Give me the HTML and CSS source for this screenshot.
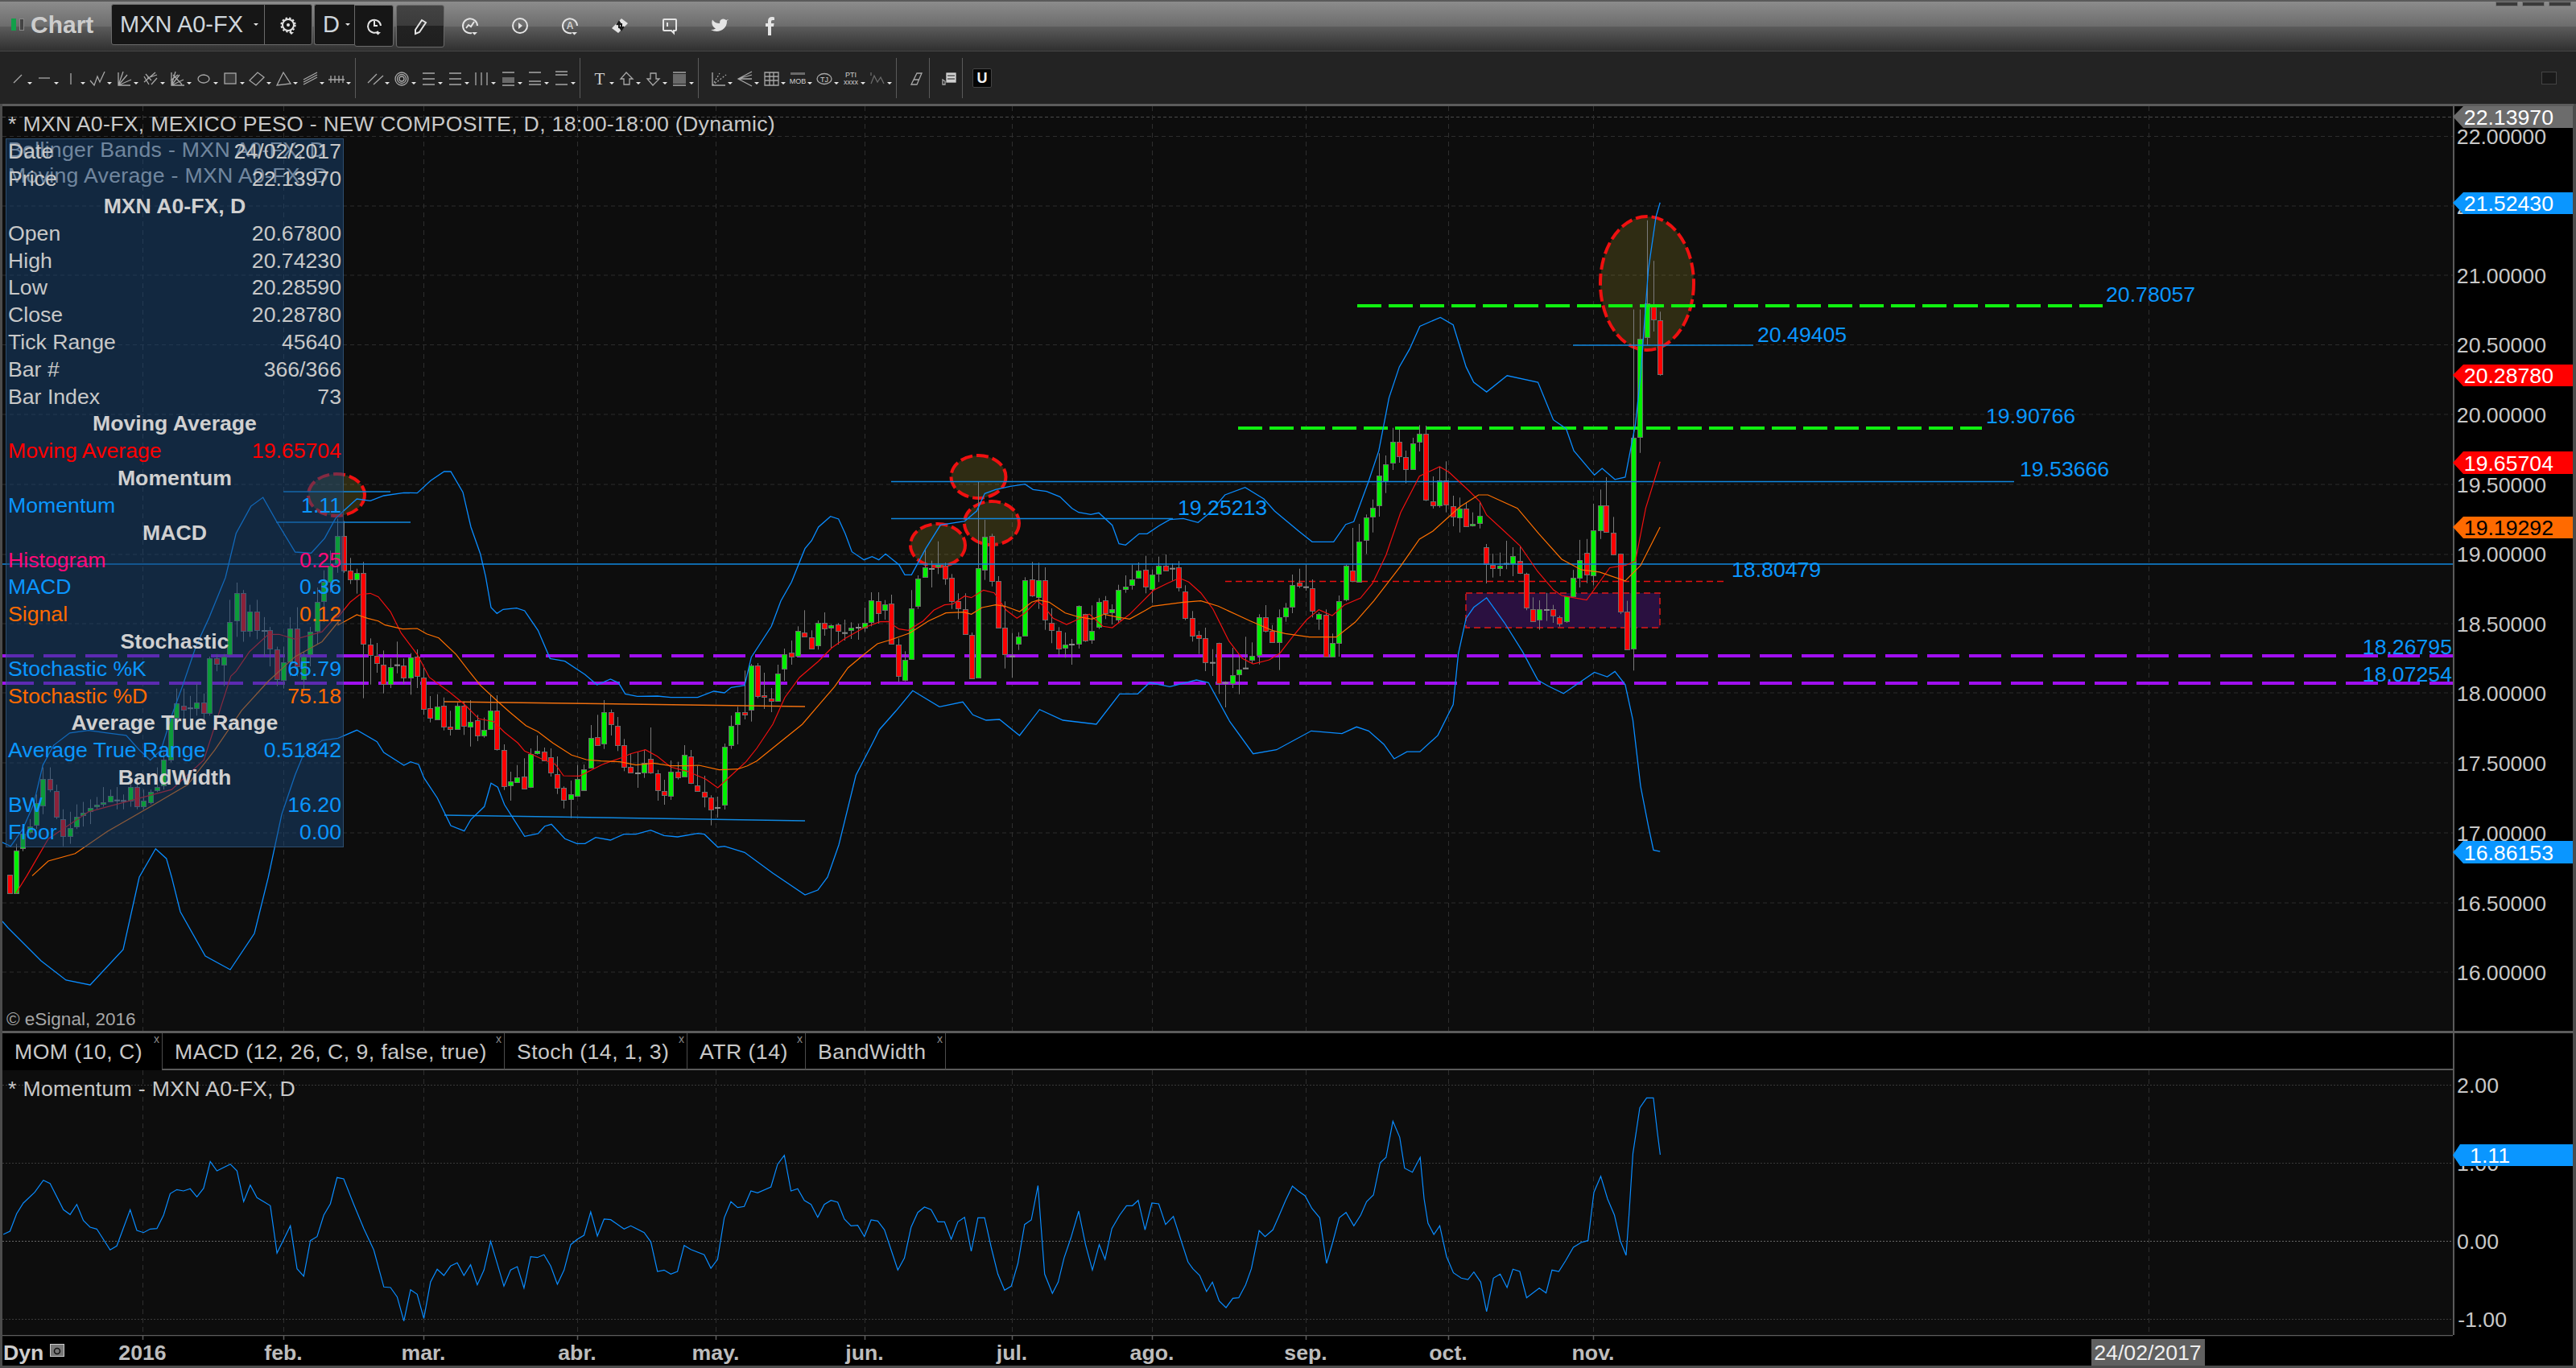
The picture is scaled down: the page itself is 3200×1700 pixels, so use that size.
FILE: index.html
```html
<!DOCTYPE html>
<html lang="en">
<head>
<meta charset="utf-8">
<title>Chart</title>
<link rel="stylesheet" href="styles.css">
</head>
<body>
<svg class="sprite" aria-hidden="true">
  <symbol id="t-gear" viewBox="0 0 24 24"><circle cx="12" cy="12" r="7"/><circle cx="12" cy="12" r="2" class="solid"/><circle cx="12" cy="12" r="8.6" stroke-dasharray="2.4 2.2"/><path d="M13 21h6l-3 3z" class="solid"/></symbol>
  <symbol id="t-clock" viewBox="0 0 24 24"><path d="M17 19A8 8 0 1 1 20 12"/><path d="M12 6v6h4"/><path d="M13 20h7l-3.500 3.500z" class="solid"/></symbol>
  <symbol id="t-pencil" viewBox="0 0 24 24"><path d="M6 16 14 4l5 3-8 12-5 2z"/></symbol>
  <symbol id="t-chart" viewBox="0 0 24 24"><path d="M14 21A9 9 0 1 1 21 12"/><path d="M7 15l3-4 3 2 4-6"/><path d="M14 20h7l-3.500 3.500z" class="solid"/></symbol>
  <symbol id="t-play" viewBox="0 0 24 24"><circle cx="12" cy="12" r="9"/><path d="M10 8l5 4-5 4z" class="solid"/></symbol>
  <symbol id="t-auto" viewBox="0 0 24 24"><path d="M14 21A9 9 0 1 1 21 12"/><text x="12" y="16" class="ictext big">A</text><path d="M14 20h7l-3.500 3.500z" class="solid"/></symbol>
  <symbol id="t-swap" viewBox="0 0 24 24"><path d="M2 15 14 3l8 6-12 12z" class="solid"/><path d="M11 15V9M8 11l3-4 3 4M14 9v6M11 13l3 4 3-4" class="cut"/></symbol>
  <symbol id="t-talk" viewBox="0 0 24 24"><path d="M5 4h14a1 1 0 0 1 1 1v12a1 1 0 0 1-1 1h-2v3l-3-3H5a1 1 0 0 1-1-1V5a1 1 0 0 1 1-1zM9 8v5"/></symbol>
  <symbol id="t-bird" viewBox="0 0 24 24"><path class="solid" d="M23 4a10.900 10.900 0 0 1-3 1 4.500 4.500 0 0 0-7.900 3v1A10.700 10.700 0 0 1 3 4.500s-3 7 4 11a11.600 11.600 0 0 1-6 1.500c9 5 20 0 20-10.500 0-.3 0-.5-.1-.8A7.700 7.700 0 0 0 23 4z"/></symbol>
  <symbol id="t-f" viewBox="0 0 24 24"><path class="solid" d="M14 24V13h3l.6-4H14V7c0-1.200.4-2 2-2h2V1.500C17.500 1.400 16.500 1 15 1c-3 0-5 1.800-5 5v3H7v4h3v11z"/></symbol>

  <symbol id="d-line" viewBox="0 0 24 24"><path d="M7 18 17 8"/></symbol>
  <symbol id="d-h" viewBox="0 0 24 24"><path d="M5 12H19"/></symbol>
  <symbol id="d-v" viewBox="0 0 24 24"><path d="M12 6V20"/></symbol>
  <symbol id="d-zig" viewBox="0 0 24 24"><path d="M3 15l5 6 4-11 3 7 6-13"/></symbol>
  <symbol id="d-fan" viewBox="0 0 24 24"><path d="M5 5V21H20M5 21 21 14M5 21 16 8M5 21 11 4"/></symbol>
  <symbol id="d-fork" viewBox="0 0 24 24"><path d="M4 10l6 10M4 17 18 5M8 12 20 8M13 20 20 12M6 7l7 8"/></symbol>
  <symbol id="d-gann" viewBox="0 0 24 24"><path d="M5 5V21H21M5 21 20 14M5 21 15 8M5 21 10 4M7 8l11 12M4 15l9-7"/></symbol>
  <symbol id="d-ell" viewBox="0 0 24 24"><ellipse cx="12" cy="13" rx="7" ry="5"/></symbol>
  <symbol id="d-rect" viewBox="0 0 24 24"><rect x="5" y="6" width="14" height="13" class="tint"/></symbol>
  <symbol id="d-dia" viewBox="0 0 24 24"><path d="M3 15 13 5l8 6-10 10z"/></symbol>
  <symbol id="d-tri" viewBox="0 0 24 24"><path d="M12 5 21 19 4 21z"/></symbol>
  <symbol id="d-par" viewBox="0 0 24 24"><path d="M4 14 21 5M4 17 21 8M4 20 21 11"/></symbol>
  <symbol id="d-cyc" viewBox="0 0 24 24"><path d="M2 14H22M5 9v9M10 9v9M15 9v9M20 9v9"/></symbol>
  <symbol id="d-two" viewBox="0 0 24 24"><path d="M3 18 14 7M10 20 22 9"/></symbol>
  <symbol id="d-rings" viewBox="0 0 24 24"><circle cx="12" cy="13" r="8"/><circle cx="12" cy="13" r="5.500"/><circle cx="12" cy="13" r="3"/></symbol>
  <symbol id="d-three" viewBox="0 0 24 24"><path d="M5 6H20M5 13H20M5 20H20"/></symbol>
  <symbol id="d-bars" viewBox="0 0 24 24"><path d="M5 5V21M12 5V21M19 5V21"/></symbol>
  <symbol id="d-band" viewBox="0 0 24 24"><path d="M5 5H20M5 21H20"/><rect x="5" y="11" width="15" height="7" class="fillg"/></symbol>
  <symbol id="d-lev" viewBox="0 0 24 24"><path d="M5 5H20M5 16H20M5 20H20"/></symbol>
  <symbol id="d-lev2" viewBox="0 0 24 24"><path d="M5 4H20M5 8H20M5 20H20"/></symbol>
  <symbol id="d-text" viewBox="0 0 24 24"><text x="12" y="20" class="ictext serif">T</text></symbol>
  <symbol id="d-up" viewBox="0 0 24 24"><path d="M12 5 20 13H16V20H9V13H5z"/></symbol>
  <symbol id="d-down" viewBox="0 0 24 24"><path d="M12 21 20 13H16V6H9V13H5z"/></symbol>
  <symbol id="d-block" viewBox="0 0 24 24"><path d="M4 5H20M4 21H20"/><rect x="4" y="7" width="16" height="12" class="fillg"/></symbol>
  <symbol id="d-ray" viewBox="0 0 24 24"><path d="M5 21 22 8M5 21 14 6" stroke-dasharray="2 2"/><path d="M5 5V21H21"/></symbol>
  <symbol id="d-arrows" viewBox="0 0 24 24"><path d="M21 4 4 13 21 22M4 13H21M4 13 21 8"/></symbol>
  <symbol id="d-grid" viewBox="0 0 24 24"><path d="M4 5H21V21H4zM4 10H21M4 15H21M10 5V21M15 5V21"/></symbol>
  <symbol id="d-mob" viewBox="0 0 24 24"><rect x="3" y="5" width="18" height="3" class="fillg"/><text x="12" y="19" class="ictext small">MOB</text></symbol>
  <symbol id="d-tj" viewBox="0 0 24 24"><ellipse cx="12" cy="13" rx="9" ry="6.500"/><text x="12" y="16.500" class="ictext small">TJ</text></symbol>
  <symbol id="d-pti" viewBox="0 0 24 24"><text x="12" y="11" class="ictext small">PTI</text><text x="12" y="20" class="ictext small">xxxx</text></symbol>
  <symbol id="d-wave" viewBox="0 0 24 24"><path d="M4 19l4-10 4 8 4-6 4 8M4 5v4"/></symbol>
  <symbol id="d-erase" viewBox="0 0 24 24"><path d="M6 20 13 6h6l-6 14zM9 14h7"/></symbol>
  <symbol id="d-stack" viewBox="0 0 24 24"><rect x="9" y="6" width="11" height="11" class="wfill"/><path d="M4 14l3 2v4H4z"/><path d="M10 9h9M10 13h9" class="cut thin"/></symbol>
</svg>

<div class="app">
  <header class="titlebar">
    <span class="led on"></span>
    <span class="led off"></span>
    <h1 class="appname">Chart</h1>
    <div class="box symbol">
      <div class="symname"><span class="boxtext">MXN A0-FX</span><i class="caret"></i></div>
      <span class="symgear"><svg class="ic bright"><use href="#t-gear"/></svg></span>
    </div>
    <div class="box interval"><span class="boxtext">D</span><i class="caret"></i></div>
    <div class="box clockbox"><svg class="ic bright"><use href="#t-clock"/></svg></div>
    <div class="box pencil"><svg class="ic bright"><use href="#t-pencil"/></svg></div>
    <div class="ticons">
      <span class="ticon"><svg class="ic bright"><use href="#t-chart"/></svg></span>
      <span class="ticon"><svg class="ic bright"><use href="#t-play"/></svg></span>
      <span class="ticon"><svg class="ic bright"><use href="#t-auto"/></svg></span>
      <span class="ticon"><svg class="ic bright"><use href="#t-swap"/></svg></span>
      <span class="ticon"><svg class="ic bright"><use href="#t-talk"/></svg></span>
      <span class="ticon"><svg class="ic bright"><use href="#t-bird"/></svg></span>
      <span class="ticon"><svg class="ic bright"><use href="#t-f"/></svg></span>
    </div>
    <div class="winctl"><i></i><i></i><i></i></div>
  </header>

  <nav class="toolbar">
    <span class="tool"><svg class="ic"><use href="#d-line"/></svg><i class="caret"></i></span>
    <span class="tool"><svg class="ic"><use href="#d-h"/></svg><i class="caret"></i></span>
    <span class="tool"><svg class="ic"><use href="#d-v"/></svg><i class="caret"></i></span>
    <span class="tool"><svg class="ic"><use href="#d-zig"/></svg><i class="caret"></i></span>
    <span class="tool"><svg class="ic"><use href="#d-fan"/></svg><i class="caret"></i></span>
    <span class="tool"><svg class="ic"><use href="#d-fork"/></svg><i class="caret"></i></span>
    <span class="tool"><svg class="ic"><use href="#d-gann"/></svg><i class="caret"></i></span>
    <span class="tool"><svg class="ic"><use href="#d-ell"/></svg><i class="caret"></i></span>
    <span class="tool"><svg class="ic"><use href="#d-rect"/></svg><i class="caret"></i></span>
    <span class="tool"><svg class="ic"><use href="#d-dia"/></svg><i class="caret"></i></span>
    <span class="tool"><svg class="ic"><use href="#d-tri"/></svg><i class="caret"></i></span>
    <span class="tool"><svg class="ic"><use href="#d-par"/></svg><i class="caret"></i></span>
    <span class="tool"><svg class="ic"><use href="#d-cyc"/></svg><i class="caret"></i></span>
    <span class="sep"></span>
    <span class="tool"><svg class="ic"><use href="#d-two"/></svg><i class="caret"></i></span>
    <span class="tool"><svg class="ic"><use href="#d-rings"/></svg><i class="caret"></i></span>
    <span class="tool"><svg class="ic"><use href="#d-three"/></svg><i class="caret"></i></span>
    <span class="tool"><svg class="ic"><use href="#d-three"/></svg><i class="caret"></i></span>
    <span class="tool"><svg class="ic"><use href="#d-bars"/></svg><i class="caret"></i></span>
    <span class="tool"><svg class="ic"><use href="#d-band"/></svg><i class="caret"></i></span>
    <span class="tool"><svg class="ic"><use href="#d-lev"/></svg><i class="caret"></i></span>
    <span class="tool"><svg class="ic"><use href="#d-lev2"/></svg><i class="caret"></i></span>
    <span class="sep"></span>
    <span class="tool"><svg class="ic"><use href="#d-text"/></svg><i class="caret"></i></span>
    <span class="tool"><svg class="ic"><use href="#d-up"/></svg><i class="caret"></i></span>
    <span class="tool"><svg class="ic"><use href="#d-down"/></svg><i class="caret"></i></span>
    <span class="tool"><svg class="ic"><use href="#d-block"/></svg><i class="caret"></i></span>
    <span class="sep"></span>
    <span class="tool"><svg class="ic"><use href="#d-ray"/></svg><i class="caret"></i></span>
    <span class="tool"><svg class="ic"><use href="#d-arrows"/></svg><i class="caret"></i></span>
    <span class="tool"><svg class="ic"><use href="#d-grid"/></svg><i class="caret"></i></span>
    <span class="tool"><svg class="ic"><use href="#d-mob"/></svg><i class="caret"></i></span>
    <span class="tool"><svg class="ic"><use href="#d-tj"/></svg><i class="caret"></i></span>
    <span class="tool"><svg class="ic"><use href="#d-pti"/></svg><i class="caret"></i></span>
    <span class="tool"><svg class="ic dim"><use href="#d-wave"/></svg><i class="caret"></i></span>
    <span class="sep"></span>
    <span class="tool solo"><svg class="ic"><use href="#d-erase"/></svg></span>
    <span class="sep near"></span>
    <span class="tool solo"><svg class="ic"><use href="#d-stack"/></svg></span>
    <span class="sep near"></span>
    <span class="ubtn">U</span>
    <span class="endbtn"></span>
  </nav>

  <div class="rule"></div>

  <section class="pane pane-main">
    <svg class="plot" id="mainplot" viewBox="3 132 3044 1149" width="3044" height="1149">
      <g id="maingrid"></g>
      <text x="10" y="163" class="lbl">* MXN A0-FX, MEXICO PESO - NEW COMPOSITE, D, 18:00-18:00 (Dynamic)</text>
      <text x="10" y="195" class="lbl">Bollinger Bands - MXN A0-FX, D</text>
      <text x="10" y="227" class="lbl">Moving Average - MXN A0-FX, D</text>
      <text x="8" y="1274" class="faint">© eSignal, 2016</text>

      <rect x="1821" y="737" width="241" height="43" class="zone"/>
      <ellipse cx="2046" cy="352" rx="58" ry="83" class="oval"/>
      <ellipse cx="1165" cy="677.500" rx="34" ry="26.500" class="oval"/>
      <ellipse cx="1215.500" cy="592.500" rx="34" ry="26.500" class="oval"/>
      <ellipse cx="1232" cy="650" rx="34" ry="27" class="oval"/>
      <ellipse cx="418" cy="615" rx="35" ry="26" class="oval"/>

      <path d="M2 815H3047M2 849H3047" class="purple"/>
      <path d="M1522 722.500H2142" class="reddash"/>

      <g id="candles"></g>

      <path d="M1686 380H2612M1538 532H2462" class="greendash"/>
      <path d="M552 872 1000 878" class="ohline"/>
      <path d="M552 1013 1000 1020M1107 598.500H2502M1107 644.500H1457M1954 429H2178M3 701H3047M352 611H485M343 649H510" class="bhline"/>

      <g id="lines"></g>

      <text x="2616" y="375" class="val">20.78057</text>
      <text x="2183" y="425" class="val">20.49405</text>
      <text x="2467" y="526" class="val">19.90766</text>
      <text x="2509" y="592" class="val">19.53666</text>
      <text x="1463" y="640" class="val">19.25213</text>
      <text x="2151" y="717" class="val">18.80479</text>
      <text x="3046" y="813" class="val end">18.26795</text>
      <text x="3046" y="847" class="val end">18.07254</text>
    </svg>

    <aside class="info">
      <div class="row"><span>Date</span><span>24/02/2017</span></div>
      <div class="row"><span>Price</span><span>22.13970</span></div>
      <div class="row head">MXN A0-FX, D</div>
      <div class="row"><span>Open</span><span>20.67800</span></div>
      <div class="row"><span>High</span><span>20.74230</span></div>
      <div class="row"><span>Low</span><span>20.28590</span></div>
      <div class="row"><span>Close</span><span>20.28780</span></div>
      <div class="row"><span>Tick Range</span><span>45640</span></div>
      <div class="row"><span>Bar #</span><span>366/366</span></div>
      <div class="row"><span>Bar Index</span><span>73</span></div>
      <div class="row head">Moving Average</div>
      <div class="row red"><span>Moving Average</span><span>19.65704</span></div>
      <div class="row head">Momentum</div>
      <div class="row blue"><span>Momentum</span><span>1.11</span></div>
      <div class="row head">MACD</div>
      <div class="row pink"><span>Histogram</span><span>0.25</span></div>
      <div class="row blue"><span>MACD</span><span>0.36</span></div>
      <div class="row orange"><span>Signal</span><span>0.12</span></div>
      <div class="row head">Stochastic</div>
      <div class="row blue"><span>Stochastic %K</span><span>65.79</span></div>
      <div class="row orange"><span>Stochastic %D</span><span>75.18</span></div>
      <div class="row head">Average True Range</div>
      <div class="row blue"><span>Average True Range</span><span>0.51842</span></div>
      <div class="row head">BandWidth</div>
      <div class="row blue"><span>BW</span><span>16.20</span></div>
      <div class="row blue"><span>Floor</span><span>0.00</span></div>
    </aside>

    <svg class="axis" viewBox="3047 132 149 1149" width="149" height="1149">
      <g class="ticks">
        <text x="3163" y="179">22.00000</text>
        <text x="3163" y="266">21.50000</text>
        <text x="3163" y="352">21.00000</text>
        <text x="3163" y="438">20.50000</text>
        <text x="3163" y="525">20.00000</text>
        <text x="3163" y="612">19.50000</text>
        <text x="3163" y="698">19.00000</text>
        <text x="3163" y="785">18.50000</text>
        <text x="3163" y="871">18.00000</text>
        <text x="3163" y="958">17.50000</text>
        <text x="3163" y="1045">17.00000</text>
        <text x="3163" y="1132">16.50000</text>
        <text x="3163" y="1218">16.00000</text>
      </g>
      <polygon points="3047,145 3060,132 3196,132 3196,159 3060,159" class="tag gray"/>
      <text x="3172" y="155" class="tagtext">22.13970</text>
      <polygon points="3047,252 3060,239 3196,239 3196,266 3060,266" class="tag bluebg"/>
      <text x="3172" y="262" class="tagtext">21.52430</text>
      <polygon points="3047,466 3060,453 3196,453 3196,480 3060,480" class="tag redbg"/>
      <text x="3172" y="476" class="tagtext">20.28780</text>
      <polygon points="3047,575 3060,561 3196,561 3196,589 3060,589" class="tag redbg"/>
      <text x="3172" y="585" class="tagtext">19.65704</text>
      <polygon points="3047,655 3060,642 3196,642 3196,669 3060,669" class="tag orangebg"/>
      <text x="3172" y="665" class="tagtext dark">19.19292</text>
      <polygon points="3047,1059 3060,1045 3196,1045 3196,1073 3060,1073" class="tag bluebg"/>
      <text x="3172" y="1069" class="tagtext">16.86153</text>
    </svg>
  </section>

  <div class="rule wide"></div>

  <section class="tabrow">
    <div class="tabs">
      <div class="tab active w1">MOM (10, C)<i class="closex">x</i></div>
      <div class="tab w2">MACD (12, 26, C, 9, false, true)<i class="closex">x</i></div>
      <div class="tab w3">Stoch (14, 1, 3)<i class="closex">x</i></div>
      <div class="tab w4">ATR (14)<i class="closex">x</i></div>
      <div class="tab w5">BandWidth<i class="closex">x</i></div>
      <div class="tabfill"></div>
    </div>
    <div class="axisblank"></div>
  </section>

  <section class="pane pane-sub">
    <svg class="plot" id="subplot" viewBox="3 1330 3044 329" width="3044" height="329">
      <g id="subgrid"></g>
      <text x="10" y="1362" class="lbl">* Momentum - MXN A0-FX, D</text>
      <g id="momentum"></g>
    </svg>
    <svg class="axis" viewBox="3047 1330 149 329" width="149" height="329">
      <g class="ticks">
        <text x="3104" y="1358">2.00</text>
        <text x="3104" y="1455">1.00</text>
        <text x="3104" y="1552">0.00</text>
        <text x="3114" y="1649">-1.00</text>
      </g>
      <polygon points="3047,1435.500 3056,1422 3196,1422 3196,1449 3056,1449" class="tag bluebg"/>
      <text x="3118" y="1445" class="tagtext">1.11</text>
    </svg>
  </section>

  <footer class="dateaxis">
    <svg class="dates" viewBox="3 1659 3194 38" width="3194" height="38">
      <path d="M3 1659.500H3047M177.500 1660v5M352.500 1660v5M526.500 1660v5M717.500 1660v5M889.500 1660v5M1074.500 1660v5M1257.500 1660v5M1431.500 1660v5M1622.500 1660v5M1799.500 1660v5M1979.500 1660v5" class="dline"/>
      <text x="4" y="1690" class="dlabel start">Dyn</text>
      <rect x="62.500" y="1670.500" width="17" height="15" class="lockbox"/>
      <circle cx="71" cy="1679" r="3.500" class="lockdot"/>
      <text x="177" y="1690" class="dlabel">2016</text>
      <text x="352" y="1690" class="dlabel">feb.</text>
      <text x="526" y="1690" class="dlabel">mar.</text>
      <text x="717" y="1690" class="dlabel">abr.</text>
      <text x="889" y="1690" class="dlabel">may.</text>
      <text x="1074" y="1690" class="dlabel">jun.</text>
      <text x="1257" y="1690" class="dlabel">jul.</text>
      <text x="1431" y="1690" class="dlabel">ago.</text>
      <text x="1622" y="1690" class="dlabel">sep.</text>
      <text x="1799" y="1690" class="dlabel">oct.</text>
      <text x="1979" y="1690" class="dlabel">nov.</text>
      <rect x="2598" y="1664" width="141" height="33" class="datetag"/>
      <text x="2668" y="1690" class="datetagtext">24/02/2017</text>
    </svg>
  </footer>
</div>
<script src="chart.js"></script>
</body>
</html>
```

FILE: styles.css
```css
* { box-sizing: border-box; }
html, body { margin: 0; padding: 0; background: #484848; }
body { width: 3200px; height: 1700px; overflow: hidden; font-family: "Liberation Sans", Arial, sans-serif; color: #cfcfcf; }
.sprite { display: none; }

.app { width: 3200px; height: 1700px; display: flex; flex-direction: column; background: #4c4c4c; }

/* title bar */
.titlebar {
  height: 64px; display: flex; align-items: flex-start; padding-left: 14px; flex: none; position: relative;
  background: linear-gradient(#8c8c8c 0, #6c6c6c 50%, #5c5c5c 50%, #303030 98%, #454545 98%);
  border-top: 2px solid #5a5a5a;
}
.led { width: 6px; height: 15px; margin-top: 21px; margin-right: 4px; }
.led.on { background: #12a04a; }
.led.off { border: 1px solid #888; background: #444; }
.appname { margin: 9px 0 0 4px; width: 100px; font-size: 30px; line-height: 40px; font-weight: 700; color: #cdcdcd; }
.box { background: #161616; border: 1px solid #6a6a6a; border-radius: 3px; display: flex; align-items: center; }
.symbol { width: 250px; height: 51px; margin-top: 3px; }
.symname { width: 190px; height: 100%; display: flex; align-items: center; padding-left: 10px; border-right: 1px solid #6a6a6a; }
.boxtext { font-size: 29px; color: #cfd6dc; }
.caret { display: block; flex: none; width: 0; height: 0; border-left: 3px solid transparent; border-right: 3px solid transparent; border-top: 3px solid #e8e8e8; }
.symname .caret { margin-left: 13px; }
.symgear { flex: 1; display: flex; justify-content: center; }
.interval { width: 50px; height: 51px; margin: 3px 0 0 2px; padding-left: 10px; border-right: 0; border-radius: 3px 0 0 3px; }
.interval .caret { margin-left: 7px; }
.clockbox { width: 49px; height: 52px; margin-top: 4px; justify-content: center; border-radius: 0 3px 3px 3px; }
.pencil { width: 60px; height: 53px; margin: 4px 0 0 3px; justify-content: center; background: linear-gradient(#434343 0, #3b3b3b 50%, #222 50%, #1f1f1f 100%); }
.ticons { display: flex; margin: 4px 0 0 1px; }
.ticon { width: 62px; height: 52px; display: flex; align-items: center; justify-content: center; }
.winctl { margin-left: auto; margin-right: 6px; display: flex; gap: 5px; }
.winctl i { display: block; width: 28px; height: 6px; background: #3a3a3a; border: 1px solid #777; }

/* icons */
.ic { display: block; flex: none; width: 24px; height: 24px; fill: none; stroke: #a8a8a8; stroke-width: 1.300; color: #a8a8a8; }
.ic.bright { stroke: #e4e4e4; stroke-width: 2; color: #e4e4e4; }
.ic.dim { stroke: #6a6a6a; }
.solid { fill: #e4e4e4; stroke: none; }
.cut { stroke: #181818; stroke-width: 2; fill: #181818; }
.cut.thin { stroke-width: 1; fill: none; }
.tint { fill: #3a3a3a; }
.fillg { fill: #6a6a6a; stroke: none; }
.wfill { fill: #d0d0d0; stroke: #d0d0d0; }
.ictext { font-family: "Liberation Sans", Arial, sans-serif; text-anchor: middle; fill: #d0d0d0; stroke: none; }
.ictext.big { font-size: 12px; font-weight: 700; }
.ictext.small { font-size: 9px; }
.ictext.serif { font-family: "Liberation Serif", serif; font-size: 21px; font-weight: 400; }

/* drawing toolbar */
.toolbar { height: 65px; flex: none; display: flex; align-items: center; padding-left: 10px; background: #232323; }
.tool { display: flex; margin-right: 3px; flex: none; }
.tool .caret { margin-top: 17px; }
.tool.solo { margin-right: 0; }
.sep { width: 1px; height: 50px; background: #5a5a5a; margin: 0 12px 0 2px; flex: none; }
.sep.near { margin-left: 4px; }
.ubtn { width: 24px; height: 24px; background: #050505; border: 1px solid #444; border-radius: 2px; color: #f0f0f0; font-size: 18px; font-weight: 700; line-height: 22px; text-align: center; flex: none; }
.endbtn { margin-left: auto; margin-right: 24px; width: 19px; height: 16px; background: #1a1a1a; border: 1px solid #444; flex: none; }

.rule { height: 3px; flex: none; margin-left: 3px; margin-right: 3px; background: #5c5c5c; }

/* panes */
.pane { display: flex; position: relative; margin-left: 3px; margin-right: 4px; flex: none; background: #000; }
.pane-main { height: 1149px; }
.pane-sub { height: 329px; }
.plot { display: block; flex: none; background: #0d0d0d; }
.axis { display: block; flex: none; background: #000; }
.axis, .axisblank { box-shadow: inset 2px 0 0 #5a5a5a; }

.lbl { font-size: 26.670px; fill: #c8c8c8; letter-spacing: .3px; }
.faint { font-size: 22.500px; fill: #a6a6a6; }
.val { font-size: 26.670px; fill: #0a96ff; }
.val.end { text-anchor: end; }
.zone { fill: #2a1040; stroke: #e01818; stroke-width: 1.500; stroke-dasharray: 8 5; }
.oval { fill: rgba(255, 235, 60, .14); stroke: #f01010; stroke-width: 4; stroke-dasharray: 15 5; }
.purple { fill: none; stroke: #a010f0; stroke-width: 4; stroke-dasharray: 40 12; }
.reddash { fill: none; stroke: #e81010; stroke-width: 1.500; stroke-dasharray: 8 5; }
.greendash { fill: none; stroke: #10f010; stroke-width: 4; stroke-dasharray: 30 9; }
.bhline { fill: none; stroke: #1088e0; stroke-width: 1.500; }
.ohline { fill: none; stroke: #f07010; stroke-width: 1.500; }

.ticks text { font-size: 26.670px; fill: #c8c8c8; text-anchor: end; }
.gray { fill: #6c6c6c; }
.bluebg { fill: #0a96ff; }
.redbg { fill: #ff0000; }
.orangebg { fill: #ff6a00; }
.tagtext { font-size: 26.670px; fill: #ffffff; text-anchor: end; }
.tagtext.dark { fill: #000; }

/* data window */
.info {
  position: absolute; left: 4px; top: 40px; width: 420px; height: 881px; padding: 0 2px;
  display: grid; grid-template-rows: repeat(26, 1fr);
  background: rgba(23, 67, 115, .5); border: 1px solid rgba(70, 110, 150, .55);
  font-size: 26.670px; color: #c8c8c8;
}
.row { display: flex; justify-content: space-between; align-items: center; white-space: nowrap; line-height: 30px; padding-bottom: 3px; }
.row.head { justify-content: center; font-weight: 700; color: #d0d0d0; }
.row.red { color: #ff0000; }
.row.blue { color: #0a96ff; }
.row.pink { color: #ff0a78; }
.row.orange { color: #ff6a00; }

/* indicator tabs */
.tabrow { height: 46px; flex: none; display: flex; margin-left: 3px; margin-right: 4px; background: #000; }
.tabs { width: 3044px; display: flex; flex: none; }
.tab { position: relative; padding: 6px 0 0 15px; font-size: 26.670px; line-height: 34px; letter-spacing: .45px; color: #c8c8c8; border-left: 1px solid #4c4c4c; border-bottom: 2px solid #5a5a5a; white-space: nowrap; flex: none; }
.tab.active { border-left: 0; border-bottom: 0; }
.closex { position: absolute; right: 3px; top: -1px; font-size: 14px; line-height: 16px; font-style: normal; letter-spacing: 0; color: #8a8a8a; }
.w1 { width: 198px; }
.w2 { width: 425px; }
.w3 { width: 227px; }
.w4 { width: 147px; }
.w5 { width: 174px; }
.tabfill { flex: 1; border-left: 1px solid #4c4c4c; border-bottom: 2px solid #5a5a5a; }
.axisblank { flex: 1; }

/* date axis */
.dateaxis { height: 38px; flex: none; margin-left: 3px; background: #000; width: 3193px; }
.dates { display: block; }
.dline { fill: none; stroke: #5c5c5c; stroke-width: 1.500; }
.dlabel { font-size: 26.670px; font-weight: 700; fill: #bdbdbd; text-anchor: middle; }
.dlabel.start { text-anchor: start; fill: #cdcdcd; }
.lockbox { fill: #777; stroke: #ccc; }
.lockdot { fill: none; stroke: #111; stroke-width: 1.500; }
.datetag { fill: #606060; }
.datetagtext { font-size: 26.670px; fill: #eeeeee; text-anchor: middle; }

/* drawn from chart.js */
.gridh { stroke: #2c2c2c; stroke-width: 1; stroke-dasharray: 5 4; fill: none; }
.gridv { stroke: #2e2e2e; stroke-width: 1; stroke-dasharray: 6 5; fill: none; }
.gridtop { stroke: #4a4a4a; stroke-width: 1; stroke-dasharray: 4 3; fill: none; }
.griddot { stroke: #3a3a3a; stroke-width: 1; stroke-dasharray: 2 2; fill: none; }
.gridzero { stroke: #666; stroke-width: 1; stroke-dasharray: 2 2; fill: none; }
.wick { stroke: #7a7a7a; stroke-width: 1; fill: none; }
.body { stroke: #6e6e6e; stroke-width: 1; }
.body.g { fill: #00f000; }
.body.r { fill: #ff0000; }
.doji { fill: #8a8a8a; }
.band { fill: none; stroke: #0a8cff; stroke-width: 1.300; }
.mared { fill: none; stroke: #f01010; stroke-width: 1.200; }
.maorange { fill: none; stroke: #ff7000; stroke-width: 1.200; }
.mom { fill: none; stroke: #0a8cff; stroke-width: 1.200; }
```

FILE: chart.js
```js
(function () {
  var NS = 'http://www.w3.org/2000/svg';
  function el(parent, name, attrs) {
    var n = document.createElementNS(NS, name);
    for (var k in attrs) n.setAttribute(k, attrs[k]);
    parent.appendChild(n);
    return n;
  }

  /* Reading frames: the numbers below were read off crops of the chart. */
  var F2 = [0, 130, 3, 1.633], F8 = [420, 560, 3, 3], F9 = [920, 500, 3, 3],
      F10 = [1420, 480, 3, 3], F3 = [1700, 220, 1.568, 1.823],
      F6 = [400, 550, 1.206, 3], F5 = [0, 1230, 1.206, 3], F7 = [1300, 1230, 0.825, 3],
      ABS = [0, 0, 1, 1];

  /* x, bodyTop, bodyBottom, wickTop, wickBottom, kind */
  var barSets = [
    [F2, [
      [35,1563,1600,1563,1600,'r'],[60,1513,1600,1500,1600,'g'],[85,1480,1510,1465,1515,'g'],[110,1465,1477,1450,1480,'g'],
      [135,1418,1462,1400,1470,'g'],[160,1368,1422,1345,1440,'g'],[185,1368,1390,1345,1395,'r'],[210,1393,1445,1380,1450,'r'],
      [235,1450,1484,1430,1505,'r'],[260,1468,1485,1435,1500,'g'],[285,1445,1465,1420,1470,'g'],[310,1437,1442,1415,1465,'g'],
      [335,1427,1434,1410,1460,'g'],[360,1420,1424,1405,1430,'g'],[385,1416,1420,1385,1425,'g'],[410,1402,1414,1390,1416,'g'],
      [435,1412,1412,1385,1430,'d'],[460,1413,1413,1400,1430,'d'],[485,1385,1412,1370,1425,'g'],[510,1385,1425,1375,1430,'r'],
      [535,1413,1424,1390,1430,'g'],[560,1395,1416,1390,1420,'g'],[585,1385,1392,1345,1395,'g'],[610,1330,1382,1315,1390,'g'],
      [635,1245,1330,1240,1335,'g'],[658,1215,1245,1185,1248,'g'],[683,1220,1228,1185,1260,'r'],[708,1225,1225,1200,1250,'d'],
      [733,1213,1225,1175,1240,'g'],[758,1213,1235,1195,1250,'r'],[781,1123,1234,1120,1240,'g'],[808,1123,1135,1115,1150,'r'],
      [833,1120,1136,1115,1180,'g'],[856,1050,1115,1005,1120,'g'],[883,992,1048,970,1080,'g'],[907,992,1068,985,1090,'r'],
      [931,1028,1068,1015,1080,'g'],[958,1028,1065,1005,1085,'r'],[983,1068,1068,1040,1120,'d'],[1006,1066,1104,1060,1140,'r'],
      [1031,1106,1166,1100,1180,'r'],[1056,1132,1168,1100,1185,'g'],[1081,1063,1130,1040,1160,'g'],[1106,1063,1140,1020,1160,'r'],
      [1132,1120,1165,1110,1190,'g'],[1156,1070,1116,1060,1140,'g'],[1181,1010,1068,980,1095,'g'],[1206,968,1008,945,1050,'g'],
      [1231,936,968,905,990,'g'],[1256,875,932,840,950,'g'],[1281,875,945,845,950,'r']
    ]],
    [F8, [
      [46,448,481,400,497,'r'],[70,455,478,440,533,'g'],[94,455,718,415,923,'r'],[121,722,760,700,872,'r'],[145,764,790,717,828,'r'],
      [169,797,868,745,905,'r'],[196,806,868,775,885,'g'],[220,800,800,712,830,'d'],[244,800,844,775,870,'r'],[271,770,844,755,910,'g'],
      [295,769,841,741,885,'r'],[319,845,961,810,985,'r'],[343,959,994,915,1013,'r'],[370,953,1000,908,1002,'g'],[394,952,1030,920,1043,'r'],
      [418,1030,1040,970,1062,'r'],[445,950,1036,940,1040,'g'],[469,952,1027,935,1060,'r'],[493,1010,1027,930,1103,'g'],[520,1006,1063,985,1083,'r'],
      [544,1040,1062,995,1070,'g'],[568,968,1036,912,1040,'g'],[592,968,1111,912,1118,'r'],[619,1115,1249,1095,1265,'r'],[643,1232,1246,1197,1305,'g'],
      [667,1217,1235,1172,1238,'g'],[694,1214,1258,1147,1262,'r'],[718,1132,1255,1110,1258,'g'],[742,1120,1130,1062,1133,'g'],[769,1121,1153,1107,1155,'r'],
      [793,1142,1200,1110,1215,'r'],[817,1205,1255,1140,1280,'r'],[841,1256,1300,1252,1334,'r'],[868,1280,1297,1230,1370,'g'],[892,1223,1285,1172,1290,'g'],
      [916,1187,1265,1170,1268,'g'],[943,1070,1181,1023,1185,'g'],[967,1067,1096,985,1100,'r'],[991,974,1092,930,1112,'g'],[1018,974,1018,965,1062,'r'],
      [1042,1025,1098,993,1120,'r'],[1066,1097,1177,1075,1195,'r'],[1090,1178,1198,1130,1200,'r'],[1117,1203,1203,1125,1257,'d'],[1141,1163,1200,1115,1220,'g'],
      [1165,1148,1198,1032,1205,'r'],[1192,1202,1264,1190,1305,'r'],[1216,1269,1285,1227,1320,'r'],[1240,1197,1288,1155,1302,'g'],[1267,1197,1218,1160,1226,'r'],
      [1291,1133,1215,1098,1218,'g'],[1315,1139,1237,1116,1243,'r'],[1339,1247,1267,1175,1270,'r'],[1366,1271,1290,1212,1330,'r'],[1390,1292,1338,1285,1397,'r'],
      [1414,1332,1332,1290,1368,'d'],[1441,1103,1318,1092,1338,'g'],[1465,1025,1098,988,1112,'g'],[1489,975,1020,955,1095,'g'],[1516,975,985,820,1002,'r'],
      [1540,800,966,795,1010,'g']
    ]],
    [F9, [
      [64,980,1093,972,1103,'r'],[88,1093,1100,1008,1143,'r'],[115,1103,1111,1065,1155,'r'],[139,1010,1111,978,1113,'g'],[163,938,991,918,1038,'g'],
      [190,932,946,888,978,'r'],[214,853,946,835,948,'g'],[238,857,871,775,872,'r'],[265,875,916,850,918,'r'],[289,821,904,813,922,'g'],
      [313,821,841,783,870,'r'],[337,832,841,828,918,'g'],[364,829,853,823,903,'r'],[388,860,860,810,888,'d'],[412,839,847,820,882,'g'],
      [439,840,840,825,885,'d'],[463,821,838,765,855,'g'],[487,737,818,708,835,'g'],[514,740,785,708,825,'r'],[538,752,772,737,810,'g'],
      [562,749,898,717,900,'r'],[589,902,1020,880,1042,'r'],[613,959,1033,928,1040,'g'],[637,767,955,700,958,'g'],[661,656,757,645,770,'g'],
      [688,614,650,550,652,'g'],[712,621,621,590,690,'d'],[736,606,612,518,640,'g'],[763,608,655,598,680,'r'],[787,653,739,640,770,'r'],
      [811,740,768,712,808,'r'],[838,770,862,712,865,'r'],[862,866,1027,858,1030,'r'],[886,617,1025,295,1028,'g'],[910,500,622,438,662,'g'],
      [937,497,664,490,686,'r'],[961,665,838,648,842,'r'],[985,839,937,742,992,'r'],[1012,947,947,860,1027,'d'],[1036,872,898,857,923,'g'],
      [1060,662,868,652,870,'g'],[1087,660,721,595,725,'r'],[1111,662,724,598,770,'g'],[1135,662,810,615,848,'r'],[1159,821,847,768,898,'r'],
      [1186,851,918,838,946,'r'],[1210,902,913,858,952,'g'],[1234,903,903,882,978,'d'],[1261,758,899,757,918,'g'],[1285,788,888,788,893,'r'],
      [1309,853,886,757,900,'g'],[1336,743,837,730,845,'g'],[1360,737,784,722,808,'r'],[1384,770,781,753,828,'g'],[1408,698,808,680,822,'g'],
      [1435,686,694,645,710,'g'],[1459,661,682,605,698,'g'],[1483,628,655,597,658,'g']
    ]],
    [F10, [
      [10,685,748,632,772,'r'],[34,703,757,683,807,'g'],[58,668,697,635,730,'g'],[85,670,688,627,690,'r'],[109,680,680,660,725,'d'],
      [133,676,751,652,765,'r'],[157,764,862,742,872,'r'],[184,865,931,838,952,'r'],[208,928,940,912,998,'r'],[232,938,1027,900,1062,'r'],
      [259,1031,1031,980,1080,'d'],[283,956,1105,956,1147,'r'],[307,1106,1106,1100,1197,'d'],[334,1078,1108,975,1125,'g'],[358,1057,1075,1000,1148,'g'],
      [382,1052,1052,934,1054,'d'],[406,1006,1021,955,1032,'g'],[433,862,1003,850,1037,'g'],[457,862,914,816,918,'r'],[481,913,955,890,957,'r'],
      [508,862,955,832,1058,'g'],[532,826,859,808,878,'g'],[556,740,820,702,846,'g'],[583,733,746,680,752,'r'],[607,749,749,665,762,'d'],
      [631,752,835,720,862,'r'],[655,850,868,843,908,'g'],[682,851,1006,832,1008,'r'],[706,956,1006,922,1010,'g'],[730,800,955,780,1008,'g'],
      [757,670,797,665,802,'g'],[781,688,728,528,730,'r'],[805,578,727,513,730,'g'],[832,488,571,478,625,'g'],[856,452,484,422,545,'g'],
      [880,334,445,250,486,'g'],[904,290,354,258,398,'g'],[931,208,286,155,312,'g'],[955,208,262,152,285,'r'],[979,265,310,240,362,'r'],
      [1006,214,310,192,312,'g'],[1030,178,208,145,243,'g'],[1054,178,425,147,428,'r'],[1081,428,443,336,456,'r'],[1105,350,443,300,452,'g'],
      [1129,350,439,280,470,'r'],[1156,448,487,408,522,'r'],[1180,455,487,415,545,'g'],[1204,455,521,432,525,'r'],[1228,514,521,470,523,'g'],
      [1255,484,511,432,530,'g'],[1279,601,664,588,735,'r'],[1303,665,677,624,713,'r'],[1330,668,677,620,708,'g'],[1354,662,662,576,682,'d'],
      [1378,632,658,600,708,'g'],[1405,652,697,598,700,'r'],[1429,700,827,695,835,'r'],[1453,830,875,787,878,'r'],[1477,832,872,798,908,'g'],
      [1504,834,834,770,875,'d'],[1528,832,857,815,882,'r'],[1552,860,884,855,896,'r']
    ]],
    [F3, [
      [385,950,1007,950,1010,'g'],[399,908,950,890,952,'g'],[411,867,907,822,930,'g'],[425,852,902,820,920,'r'],[438,800,902,740,925,'g'],
      [451,743,800,708,820,'g'],[463,743,804,680,806,'r'],[477,805,855,770,857,'r'],[490,853,985,853,990,'r'],[503,985,1070,960,1072,'r'],
      [516,590,1068,300,1118,'g'],[529,366,588,300,625,'g'],[542,286,363,98,382,'g'],[555,293,322,190,350,'r'],[568,325,448,305,450,'r']
    ]]
  ];

  function seg(f, pts) {
    return pts.map(function (p) { return [f[0] + p[0] / f[2], f[1] + p[1] / f[3]]; });
  }
  function join() {
    var out = [];
    for (var i = 0; i < arguments.length; i++) out = out.concat(arguments[i]);
    return out.map(function (p) { return p[0].toFixed(1) + ',' + p[1].toFixed(1); }).join(' ');
  }

  var upper = join(
    seg(F2, [[0,1495],[40,1505],[85,1470],[125,1420],[160,1340],[200,1300],[260,1275],[330,1270],[400,1275],[470,1280],[520,1310],[560,1330],[600,1310],[640,1240],[680,1180],[730,1100],[780,1040],[840,960],[880,870],[935,815],[980,797],[1030,845],[1100,908],[1160,910],[1210,880],[1250,840]]),
    seg(F8, [[20,225],[70,180],[120,187],[170,168],[245,157],[295,158],[345,112],[395,78],[420,78],[465,155],[495,285],[530,385],[550,470],[570,585],[592,607],[615,592],[665,587],[695,597],[745,670],[790,775],[845,785],[920,835],[965,873],[1015,852],[1045,865],[1070,907],[1115,916],[1190,915],[1240,920],[1340,920],[1400,897],[1440,903],[1465,883],[1515,875]]),
    seg(F9, [[40,950],[115,835],[150,740],[190,670],[240,545],[265,515],[290,465],[335,425],[365,435],[390,490],[415,557],[460,587],[490,575],[515,587],[540,565],[590,605],[612,643],[637,643],[690,545],[745,457],[835,443],[880,405],[910,340],[950,325],[1005,313],[1060,305],[1090,325],[1140,332],[1190,352],[1235,395],[1260,410],[1305,418],[1335,412],[1385,458],[1410,527],[1435,532],[1485,490],[1515,490]]),
    seg(F10, [[60,520],[100,497],[150,493],[205,508],[245,475],[305,405],[380,377],[450,420],[490,465],[580,540],[630,580],[710,580],[755,515],[785,505]]),
    seg(F3, [[0,690],[20,620],[40,500],[60,430],[80,390],[100,338],[140,318],[165,335],[190,430],[205,465],[230,487],[270,450],[330,465],[360,550],[385,570],[400,620],[440,675],[455,660],[480,685],[500,680],[520,560],[530,450],[545,210],[560,90],[568,58]])
  );

  var lower = join(
    seg(ABS, [[3,1145],[10,1153],[51,1194],[82,1218],[112,1224],[153,1180],[173,1090]]),
    seg(F2, [[580,1510],[620,1530],[640,1568]]),
    seg(ABS, [[224,1133],[255,1188],[286,1205],[316,1160]]),
    seg(F2, [[1000,1568],[1050,1440],[1100,1360],[1130,1320],[1200,1290]]),
    seg(F8, [[0,1072],[70,1042],[145,1085],[170,1125],[245,1173],[270,1160],[300,1170],[320,1220],[370,1295],[420,1398],[470,1418],[495,1375],[545,1327],[570,1240],[595,1255],[620,1320],[695,1438],[745,1428],[770,1400],[795,1393],[845,1447],[890,1465],[920,1465],[960,1442],[1015,1452],[1065,1430],[1110,1430],[1165,1415],[1215,1435],[1265,1440],[1340,1427],[1365,1430],[1415,1478],[1440,1475],[1515,1498]]),
    seg(ABS, [[960,1085],[1000,1112],[1016,1106],[1028,1090],[1042,1050]]),
    seg(F6, [[800,1240],[825,1120],[835,1070],[860,1000],[885,925],[925,985],[960,967],[975,1015],[995,1035],[1015,1032],[1045,1092],[1075,995],[1110,1035],[1160,1050],[1195,937],[1222,937],[1240,895],[1270,910],[1310,885],[1328,895],[1360,1040],[1395,1160],[1430,1145],[1482,1075],[1528,1085],[1550,1060],[1568,1075]]),
    seg(F3, [[30,1285],[50,1318],[75,1302],[100,1302],[135,1265],[165,1195],[175,1080],[190,1000],[205,975],[230,953],[265,1010],[300,1075],[330,1140],[350,1153],[380,1170],[440,1122],[465,1132],[480,1120],[500,1150],[515,1230],[530,1380],[545,1470],[555,1525],[568,1528]])
  );

  var red = join(
    seg(F2, [[60,1600],[100,1565],[180,1490],[330,1435],[640,1390],[760,1330],[860,1160],[880,1150],[930,1110],[1000,1075],[1040,1075],[1100,1085],[1200,1070],[1250,1040]]),
    seg(F8, [[0,620],[45,565],[80,537],[120,532],[150,545],[195,600],[235,680],[295,760],[340,845],[415,900],[470,945],[525,1000],[580,1010],[620,1050],[670,1090],[695,1120],[760,1150],[810,1170],[840,1212],[900,1213],[945,1190],[985,1170],[1055,1145],[1090,1130],[1145,1115],[1190,1140],[1240,1180],[1300,1195],[1370,1225],[1415,1257],[1450,1225],[1520,1160],[1560,1110]]),
    seg(F9, [[120,1200],[165,1100],[220,1025],[290,965],[340,915],[390,880],[460,840],[520,818],[550,817],[590,845],[625,850],[680,815],[720,775],[760,755],[790,752],[835,722],[860,728],[905,700],[945,710],[990,775],[1030,805],[1060,785],[1105,740],[1130,760],[1165,805],[1215,828],[1255,810],[1300,790],[1350,835],[1385,840],[1450,790],[1495,745]]),
    seg(F10, [[40,760],[90,735],[135,715],[170,730],[215,770],[260,830],[320,950],[370,1015],[410,1035],[470,1020],[510,995],[560,930],[610,870],[655,833],[705,855],[750,815],[810,790],[855,735],[905,630],[960,470],[1030,335],[1105,300],[1140,320],[1215,390],[1255,430],[1280,480],[1340,535],[1405,595],[1470,690],[1530,760],[1560,780]]),
    seg(F3, [[385,950],[425,958],[470,885],[500,880],[520,870],[540,750],[568,645]])
  );

  var orange = join(
    seg(F2, [[120,1565],[180,1535],[280,1520],[400,1475],[560,1425],[700,1380],[800,1310],[900,1230],[1000,1170],[1100,1120],[1200,1090],[1260,1050]]),
    seg(F8, [[0,650],[70,612],[110,625],[150,635],[175,650],[240,665],[295,663],[330,683],[375,698],[440,760],[490,825],[530,875],[595,935],[640,975],[700,1025],[745,1048],[800,1090],[870,1135],[925,1152],[980,1157],[1050,1160],[1110,1172],[1175,1165],[1240,1175],[1300,1175],[1345,1173],[1420,1190],[1490,1187],[1525,1175],[1560,1157]]),
    seg(F9, [[230,1200],[290,1130],[350,1060],[400,990],[460,940],[510,900],[560,885],[630,860],[700,815],[765,785],[830,782],[860,790],[900,765],[950,755],[985,760],[1040,780],[1085,745],[1110,737],[1150,745],[1210,785],[1260,800],[1310,808],[1355,790],[1400,800],[1450,808],[1510,775]]),
    seg(F10, [[35,820],[150,805],[215,800],[280,820],[400,875],[480,910],[530,922],[620,935],[720,935],[790,880],[860,800],[960,670],[1030,570],[1080,540],[1180,450],[1250,405],[1285,405],[1395,455],[1475,550],[1560,645]]),
    seg(F3, [[415,890],[450,895],[500,915],[530,880],[568,793]])
  );

  var momentum = join(
    seg(F5, [[5,912],[15,900],[25,835],[35,795],[52,755],[65,710],[75,722],[95,820],[105,838],[115,800],[125,860],[135,885],[145,892],[165,970],[175,955],[195,820],[205,897],[215,905],[225,892],[235,890],[245,840],[255,760],[265,745],[275,750],[285,742],[295,772],[305,740],[315,640],[325,675],[345,650],[355,675],[365,790],[375,728],[385,775],[395,790],[405,805],[415,982],[435,880],[445,1040],[455,1068],[465,935],[475,920],[485,840],[495,798],[505,700],[515,705],[530,800],[545,890],[560,970],[575,1108],[585,1110],[595,1145],[605,1235],[615,1118],[625,1135],[635,1225],[645,1090],[655,1042],[665,1065],[675,1030],[685,1018],[695,1065],[705,1025],[715,1100],[725,1045],[735,938],[755,1105],[765,1045],[775,1032],[785,1112],[795,995],[805,998],[815,988],[825,1030],[835,1098],[845,1045],[855,950],[865,930],[875,915],[885,828],[895,918],[905,855],[915,857],[935,892],[945,880],[965,905],[975,940],[985,1050],[995,1045],[1005,1060],[1015,1050],[1025,953],[1035,968],[1055,988],[1065,1038],[1075,1005],[1085,850],[1095,790],[1105,812],[1115,808],[1125,750],[1135,757],[1155,735],[1165,650],[1175,617],[1185,750],[1195,742],[1205,785],[1215,800],[1225,848],[1235,800],[1245,785],[1255,792],[1265,855],[1275,880],[1285,878],[1295,920],[1305,858],[1315,862],[1325,895],[1345,1045],[1355,1000],[1365,885],[1375,830],[1385,810],[1395,820],[1405,865],[1415,865],[1425,930],[1435,865],[1445,848],[1455,975],[1465,850],[1475,850],[1485,960],[1495,1060],[1505,1120],[1515,1105],[1525,1020],[1535,875],[1545,858],[1555,730],[1565,1060]]),
    seg(F7, [[6,1132],[12,1090],[18,1000],[25,925],[33,825],[40,950],[47,1045],[54,950],[60,1005],[67,890],[75,840],[82,805],[88,805],[94,785],[101,895],[108,795],[115,798],[122,875],[130,845],[137,925],[145,1015],[150,1040],[157,1065],[164,1125],[170,1090],[177,1160],[184,1185],[191,1150],[197,1148],[204,1100],[210,1040],[218,898],[224,920],[232,895],[238,845],[245,785],[252,732],[258,750],[265,768],[272,815],[280,850],[287,1020],[293,945],[300,850],[307,830],[315,880],[322,840],[328,790],[335,765],[342,645],[348,625],[355,490],[362,550],[367,665],[375,680],[383,625],[387,780],[391,870],[397,912],[403,880],[410,995],[417,1055],[425,1075],[432,1080],[438,1052],[445,1090],[451,1200],[458,1075],[465,1060],[472,1110],[478,1042],[485,1050],[492,1148],[505,1112],[512,1130],[518,1045],[525,1050],[532,1010],[540,960],[548,942],[555,935],[561,755],[568,695],[575,780],[582,840],[588,935],[594,990],[597,840],[601,610],[608,440],[615,403],[622,403],[626,530],[629,615]])
  );

  /* grid */
  var verticals = [177, 352, 526, 717, 889, 1074, 1257, 1431, 1622, 1799, 1979, 2669];
  var levels = [169.5, 256, 342, 428.5, 515, 602, 689, 775, 861, 948, 1035, 1122, 1208];
  var mg = document.getElementById('maingrid');
  levels.forEach(function (y) { el(mg, 'path', { d: 'M3 ' + y + 'H3047', 'class': 'gridh' }); });
  el(mg, 'path', { d: 'M3 145.5H3047', 'class': 'gridtop' });
  verticals.forEach(function (x) { el(mg, 'path', { d: 'M' + (x + .5) + ' 132V1281', 'class': 'gridv' }); });

  var sg = document.getElementById('subgrid');
  verticals.forEach(function (x) { el(sg, 'path', { d: 'M' + (x + .5) + ' 1330V1659', 'class': 'gridv' }); });
  [1348.5, 1445.5, 1639.5].forEach(function (y) { el(sg, 'path', { d: 'M3 ' + y + 'H3047', 'class': 'griddot' }); });
  el(sg, 'path', { d: 'M3 1542.5H3047', 'class': 'gridzero' });

  /* candles */
  var cg = document.getElementById('candles');
  barSets.forEach(function (set) {
    var f = set[0];
    set[1].forEach(function (b) {
      var cx = Math.round(f[0] + b[0] / f[2]) + .5;
      var t = f[1] + b[1] / f[3], bt = f[1] + b[2] / f[3], hi = f[1] + b[3] / f[3], lo = f[1] + b[4] / f[3];
      el(cg, 'path', { d: 'M' + cx + ' ' + hi.toFixed(1) + 'V' + lo.toFixed(1), 'class': 'wick' });
      if (b[5] === 'd') {
        el(cg, 'rect', { x: cx - 3.5, y: (t - 1).toFixed(1), width: 7, height: 2, 'class': 'doji' });
      } else {
        el(cg, 'rect', { x: cx - 3, y: Math.round(t) + .5, width: 6, height: Math.max(1, Math.round(bt - t)), 'class': 'body ' + b[5] });
      }
    });
  });

  /* studies */
  var lg = document.getElementById('lines');
  el(lg, 'polyline', { points: red, 'class': 'mared' });
  el(lg, 'polyline', { points: orange, 'class': 'maorange' });
  el(lg, 'polyline', { points: upper, 'class': 'band' });
  el(lg, 'polyline', { points: lower, 'class': 'band' });
  el(document.getElementById('momentum'), 'polyline', { points: momentum, 'class': 'mom' });
})();
```
